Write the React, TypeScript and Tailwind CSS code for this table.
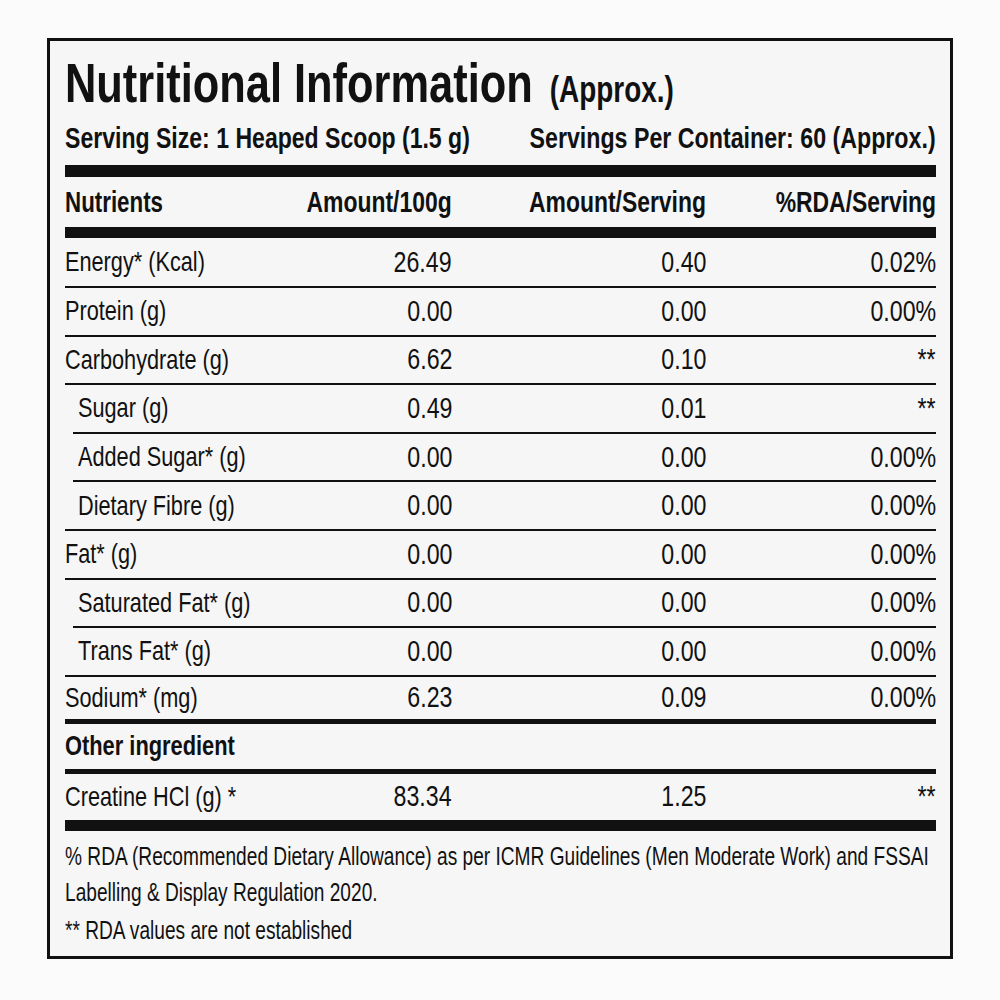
type Row = {
  label: string;
  per100: string;
  perServing: string;
  rda: string;
  sub?: boolean;
};

const rows: Row[] = [
  { label: "Energy* (Kcal)", per100: "26.49", perServing: "0.40", rda: "0.02%" },
  { label: "Protein (g)", per100: "0.00", perServing: "0.00", rda: "0.00%" },
  { label: "Carbohydrate (g)", per100: "6.62", perServing: "0.10", rda: "**" },
  { label: "Sugar (g)", per100: "0.49", perServing: "0.01", rda: "**", sub: true },
  { label: "Added Sugar* (g)", per100: "0.00", perServing: "0.00", rda: "0.00%", sub: true },
  { label: "Dietary Fibre (g)", per100: "0.00", perServing: "0.00", rda: "0.00%", sub: true },
  { label: "Fat* (g)", per100: "0.00", perServing: "0.00", rda: "0.00%" },
  { label: "Saturated Fat* (g)", per100: "0.00", perServing: "0.00", rda: "0.00%", sub: true },
  { label: "Trans Fat* (g)", per100: "0.00", perServing: "0.00", rda: "0.00%", sub: true },
  { label: "Sodium* (mg)", per100: "6.23", perServing: "0.09", rda: "0.00%" },
];

// the label face is a condensed grotesque; Liberation Sans squeezed sideways stands in for it
const cols = "grid grid-cols-[230px_157px_254px_230px] items-center";

function Num({ children }: { children: React.ReactNode }) {
  return (
    <div className="flex justify-end whitespace-nowrap text-[29px] leading-none">
      <span className="inline-block shrink-0 origin-right scale-x-[0.8]">{children}</span>
    </div>
  );
}

function Head({ children }: { children: React.ReactNode }) {
  return (
    <div className="flex justify-end whitespace-nowrap">
      <span className="inline-block shrink-0 origin-right scale-x-[0.79]">{children}</span>
    </div>
  );
}

function DataRow({ row, height }: { row: Row; height: string }) {
  return (
    <div className={`${cols} ${height}`}>
      <div className={`whitespace-nowrap text-[28px] leading-none ${row.sub ? "pl-[13px]" : ""}`}>
        <span className="inline-block origin-left scale-x-[0.775]">{row.label}</span>
      </div>
      <Num>{row.per100}</Num>
      <Num>{row.perServing}</Num>
      <Num>{row.rda}</Num>
    </div>
  );
}

export default function App() {
  return (
    <div className="min-h-[1000px] w-[1000px] overflow-hidden bg-[#fbfbfb] pt-[38px] pl-[47px] font-['Liberation_Sans',Arial,sans-serif] text-[#111]">
      <div className="w-[906px] h-[921px] overflow-hidden border-[3px] border-[#111] bg-[#f6f6f6] pl-[15px] pr-[14px] pt-[14px]">
        <div className="h-[56px] whitespace-nowrap text-[56px] font-bold leading-none">
          <span className="inline-block origin-left scale-x-[0.775]">
            Nutritional Information
            <span className="ml-[22px] text-[36px]">(Approx.)</span>
          </span>
        </div>

        <div className="mt-[13px] grid grid-cols-2 text-[29px] font-bold leading-none whitespace-nowrap">
          <div className="flex">
            <span className="inline-block shrink-0 origin-left scale-x-[0.795]">Serving Size: 1 Heaped Scoop (1.5 g)</span>
          </div>
          <div className="flex justify-end">
            <span className="inline-block shrink-0 origin-right scale-x-[0.8]">Servings Per Container: 60 (Approx.)</span>
          </div>
        </div>

        <div className="mt-[12px] h-[12px] bg-[#111]" />

        <div className={`${cols} h-[50px] text-[29px] font-bold leading-none`}>
          <div className="whitespace-nowrap">
            <span className="inline-block origin-left scale-x-[0.77]">Nutrients</span>
          </div>
          <Head>Amount/100g</Head>
          <Head>Amount/Serving</Head>
          <Head>%RDA/Serving</Head>
        </div>

        <div className="h-[11px] bg-[#111]" />

        {rows.map((row, i) => {
          const last = i === rows.length - 1;
          const next = rows[i + 1];
          const height = i === 0 ? "h-[48px]" : last ? "h-[42px]" : "h-[46.6px]";
          return (
            <div key={row.label}>
              <DataRow row={row} height={height} />
              {!last && (
                <div className={`h-[2px] bg-[#111] ${row.sub && next?.sub ? "ml-[8px]" : ""}`} />
              )}
            </div>
          );
        })}

        <div className="h-[5px] bg-[#111]" />

        <div className="h-[45px] flex items-center whitespace-nowrap text-[28px] font-bold leading-none">
          <span className="inline-block origin-left scale-x-[0.78]">Other ingredient</span>
        </div>

        <div className="h-[5px] bg-[#111]" />

        <DataRow
          row={{ label: "Creatine HCl (g) *", per100: "83.34", perServing: "1.25", rda: "**" }}
          height="h-[46px]"
        />

        <div className="h-[11px] bg-[#111]" />

        <div className="mt-[7px] whitespace-nowrap text-[25px] leading-[36px]">
          <div className="inline-block origin-left scale-x-[0.765]">
            <p>
              % RDA (Recommended Dietary Allowance) as per ICMR Guidelines (Men Moderate Work) and FSSAI
              <br />
              Labelling &amp; Display Regulation 2020.
            </p>
            <p className="mt-[2px]">** RDA values are not established</p>
          </div>
        </div>
      </div>
    </div>
  );
}
